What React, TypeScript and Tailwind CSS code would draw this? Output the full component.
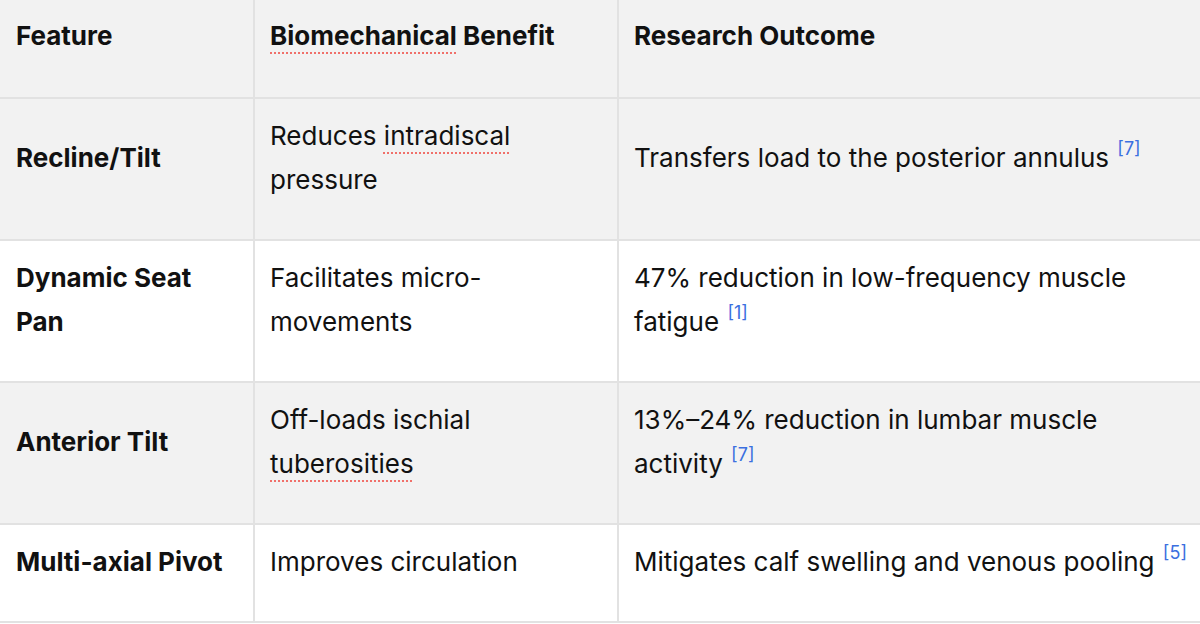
import React from "react";

const Sp = ({ children }: { children: React.ReactNode }) => (
  <span className="underline decoration-dotted decoration-[#f0706a] decoration-2 underline-offset-[7px]">{children}</span>
);

const Ref = ({ n }: { n: number }) => (
  <sup className="text-[#3b6fe0] text-[18px] leading-none align-super ml-[1px] relative top-[-2px]">[{n}]</sup>
);

type Row = { f: React.ReactNode; b: React.ReactNode; r: React.ReactNode; bg: string };

const rows: Row[] = [
  {
    f: "Recline/Tilt",
    b: (
      <>
        Reduces <Sp>intradiscal</Sp> pressure
      </>
    ),
    r: (
      <>
        Transfers load to the posterior annulus <Ref n={7} />
      </>
    ),
    bg: "bg-[#f2f2f2]",
  },
  {
    f: "Dynamic Seat Pan",
    b: "Facilitates micro-movements",
    r: (
      <>
        47% reduction in low-frequency muscle fatigue <Ref n={1} />
      </>
    ),
    bg: "bg-white",
  },
  {
    f: "Anterior Tilt",
    b: (
      <>
        Off-loads ischial <Sp>tuberosities</Sp>
      </>
    ),
    r: (
      <>
        13%–24% reduction in lumbar muscle activity <Ref n={7} />
      </>
    ),
    bg: "bg-[#f2f2f2]",
  },
  {
    f: "Multi-axial Pivot",
    b: "Improves circulation",
    r: (
      <>
        Mitigates calf swelling and venous pooling <Ref n={5} />
      </>
    ),
    bg: "bg-white",
  },
];

export default function App() {
  return (
    <div
      className="w-[1200px] h-[624px] overflow-hidden bg-white text-[#111] text-[26px] leading-[44px]"
      style={{ fontFamily: "Inter, 'Noto Sans', sans-serif" }}
    >
      <table className="w-[1206px] border-collapse table-fixed">
        <colgroup>
          <col className="w-[254px]" />
          <col className="w-[364px]" />
          <col className="w-[588px]" />
        </colgroup>
        <thead>
          <tr className="bg-[#f2f2f2]">
            <th className="text-left align-middle font-bold border-b-2 border-r-2 border-[#e2e2e2] pl-4 pr-4 pt-[14px] pb-[39px]">
              Feature
            </th>
            <th className="text-left align-middle font-bold border-b-2 border-r-2 border-[#e2e2e2] pl-[15px] pr-4 pt-[14px] pb-[39px]">
              <Sp>Biomechanical</Sp> Benefit
            </th>
            <th className="text-left align-middle font-bold border-b-2 border-[#e2e2e2] pl-[15px] pr-4 pt-[14px] pb-[39px]">
              Research Outcome
            </th>
          </tr>
        </thead>
        <tbody>
          {rows.map((r, i) => (
            <tr key={i} className={r.bg}>
              <td className="align-middle font-bold border-b-2 border-r-2 border-[#e2e2e2] pl-4 pr-4 pt-[15px] pb-[37px]">
                {r.f}
              </td>
              <td className="align-middle border-b-2 border-r-2 border-[#e2e2e2] pl-[15px] pr-4 pt-[15px] pb-[37px]">
                {r.b}
              </td>
              <td className="align-middle border-b-2 border-[#e2e2e2] pl-[15px] pr-4 pt-[15px] pb-[37px]">
                {r.r}
              </td>
            </tr>
          ))}
        </tbody>
      </table>
    </div>
  );
}
